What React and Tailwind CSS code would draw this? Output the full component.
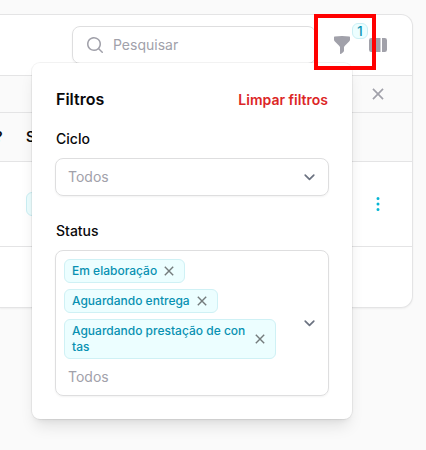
import {
  HiMiniMagnifyingGlass,
  HiMiniFunnel,
  HiMiniViewColumns,
  HiMiniEllipsisVertical,
} from 'react-icons/hi2';

function Chevron() {
  return (
    <svg viewBox="0 0 16 16" className="size-4 shrink-0" fill="none" stroke="#6b7280" strokeWidth="1.7" strokeLinecap="round" strokeLinejoin="round">
      <path d="M4.2 6.1 8.5 10.3l4.3-4.2" />
    </svg>
  );
}

function Cross({ className }) {
  return (
    <svg viewBox="0 0 10 10" className={className} fill="none" stroke="currentColor" strokeWidth="1.4">
      <path d="M.8.8 9.2 9.2M9.2.8.8 9.2" />
    </svg>
  );
}

function Tag({ children }) {
  return (
    <div className="flex max-w-[212px] items-center justify-between gap-[7px] rounded-md border border-[#cff1f5] bg-[#ecfeff] py-[3px] pl-[7px] pr-[10px] text-xs font-medium leading-4 text-[#0891b2]">
      <span className="break-all">{children}</span>
      <Cross className="size-[10px] shrink-0 text-[#747b7c]" />
    </div>
  );
}

function FilterPanel() {
  return (
    <section className="absolute left-8 top-[63px] h-[356px] w-80 rounded-lg bg-white px-[23px] pt-[24px] text-[#09090b] shadow-lg ring-1 ring-black/5">
      <div className="flex h-6 items-center justify-between pl-px">
        <h4 className="text-base font-semibold leading-6">Filtros</h4>
        <button className="pr-px pt-[2px] text-sm font-semibold text-[#dc2626]">Limpar filtros</button>
      </div>
      <div className="mt-4 pl-px text-sm font-medium leading-6">Ciclo</div>
      <div className="mt-[7px] flex h-[38px] w-[274px] items-center justify-between rounded-lg border border-[#dededf] pl-3 pr-[11px] shadow-xs">
        <span className="text-sm text-[#a1a1aa]">Todos</span>
        <Chevron />
      </div>
      <div className="mt-[23px] pl-px text-sm font-medium leading-6">Status</div>
      <div className="mt-[7px] flex h-[146px] w-[274px] items-center justify-between rounded-lg border border-[#dededf] pl-2 pr-[11px] shadow-xs">
        <div className="flex h-full flex-col items-start gap-[6px] pt-2">
          <Tag>Em elaboração</Tag>
          <Tag>Aguardando entrega</Tag>
          <Tag>Aguardando prestação de contas</Tag>
          <span className="pl-1 pt-[2px] text-sm leading-5 text-[#a1a1aa]">Todos</span>
        </div>
        <Chevron />
      </div>
    </section>
  );
}

export default function App() {
  return (
    <main className="relative h-[450px] w-[426px] overflow-hidden bg-[#fafafa] pt-[14px] font-['Inter',sans-serif] text-sm">
      <div className="h-[294px] w-[413px] overflow-hidden rounded-r-xl border border-l-0 border-[#e4e4e5] bg-white shadow-xs">
        <div className="flex h-[61px] items-start border-b border-[#e4e4e5] pl-[72px] pt-[11px]">
          <div className="flex h-[38px] w-[244px] items-center rounded-lg border border-[#dededf] pl-3 shadow-xs">
            <HiMiniMagnifyingGlass className="size-5 text-[#a1a1aa]" />
            <span className="ml-2 text-[#a1a1aa]">Pesquisar</span>
          </div>
          <div className="relative ml-4 mt-[9px] text-[#a1a1aa]">
            <HiMiniFunnel className="size-5" />
            <span className="absolute left-5 top-[-12px] flex size-4 items-center justify-center rounded-md border border-[#cbeff4] bg-[#ecfeff] text-[13px] font-medium leading-4 text-[#0891b2]">1</span>
          </div>
          <HiMiniViewColumns className="ml-4 mt-[9px] size-5 text-[#a1a1aa]" />
        </div>
        <div className="flex h-[37px] items-center justify-end border-b border-[#e4e4e5] bg-[#fafafa] pr-[28px]">
          <Cross className="size-3 text-[#a1a1aa]" />
        </div>
        <div className="flex h-[49px] items-center border-b border-[#e4e4e5] bg-[#fafafa] font-semibold text-[#09090b]">
          <span className="-ml-[5px] w-[31px]">?</span>
          <span className="w-2">S</span>
        </div>
        <div className="flex h-[85px] items-center justify-between border-b border-[#e4e4e5] pl-[26px] pr-6">
          <div className="h-6 w-20 rounded-md border border-[#cbeff4] bg-[#ecfeff]" />
          <HiMiniEllipsisVertical className="size-5 text-[#06b6d4]" />
        </div>
      </div>
      <FilterPanel />
      <div className="absolute left-[314px] top-[14px] h-14 w-[62px] border-4 border-[#ff0000]" />
    </main>
  );
}
